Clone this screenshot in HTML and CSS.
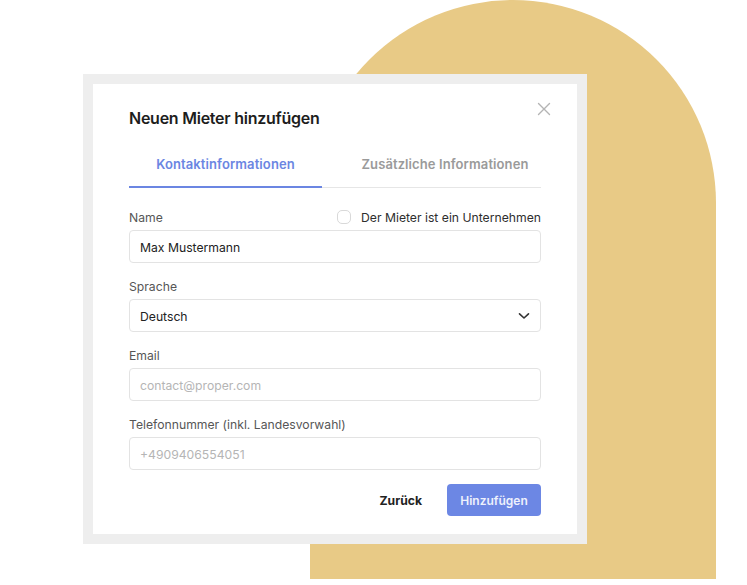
FILE: index.html
```html
<!DOCTYPE html>
<html lang="de">
<head>
<meta charset="utf-8">
<title>Neuen Mieter hinzufügen</title>
<link rel="stylesheet" href="styles.css">
</head>
<body>
<div class="stage">
  <div class="blob"></div>
  <div class="modal">
    <button class="close" aria-label="Schließen">
      <svg width="14" height="14" viewBox="0 0 14 14"><path d="M1.5 1.5 L12.5 12.5 M12.5 1.5 L1.5 12.5" stroke="#b4b4b4" stroke-width="1.4" fill="none" stroke-linecap="round"/></svg>
    </button>
    <h1 class="title">Neuen Mieter hinzufügen</h1>
    <div class="tabs">
      <div class="tab active">Kontaktinformationen</div>
      <div class="tab">Zusätzliche Informationen</div>
    </div>
    <form class="form">
      <div class="field">
        <div class="label-row">
          <label class="label">Name</label>
          <label class="check"><span class="box"></span>Der Mieter ist ein Unternehmen</label>
        </div>
        <div class="input">Max Mustermann</div>
      </div>
      <div class="field">
        <div class="label-row"><label class="label">Sprache</label></div>
        <div class="input select">Deutsch
          <svg width="12" height="8" viewBox="0 0 12 8"><path d="M1.5 1.8 L6 6 L10.5 1.8" stroke="#333" stroke-width="1.6" fill="none" stroke-linecap="round" stroke-linejoin="round"/></svg>
        </div>
      </div>
      <div class="field">
        <div class="label-row"><label class="label">Email</label></div>
        <div class="input placeholder">contact@proper.com</div>
      </div>
      <div class="field">
        <div class="label-row"><label class="label">Telefonnummer (inkl. Landesvorwahl)</label></div>
        <div class="input placeholder">+4909406554051</div>
      </div>
      <div class="actions">
        <button type="button" class="btn-back">Zurück</button>
        <button type="button" class="btn-add">Hinzufügen</button>
      </div>
    </form>
  </div>
</div>
</body>
</html>
```
FILE: styles.css
```css
* { box-sizing: border-box; }
html, body { margin: 0; padding: 0; background: #fff; }
body { font-family: Inter, "Noto Sans", "Liberation Sans", sans-serif; }
.stage {
  position: relative;
  width: 747px;
  height: 585px;
  overflow: hidden;
  padding: 74px 0 0 83px;
}
.blob {
  position: absolute;
  left: 310px;
  top: 0;
  width: 406px;
  height: 579px;
  background: #e8ca86;
  border-radius: 203px 203px 0 0;
}
.modal {
  position: relative;
  width: 504px;
  height: 470px;
  background: #fff;
  border: 10px solid #eeeeee;
  padding: 24px 36px 0 36px;
}
.close {
  position: absolute;
  top: 18px;
  right: 26px;
  width: 14px;
  height: 14px;
  padding: 0;
  border: 0;
  background: none;
  display: flex;
}
.title {
  margin: 0;
  font-size: 16px;
  line-height: 20px;
  font-weight: 600;
  color: #1d1d1d;
  letter-spacing: -0.25px;
}
.tabs {
  display: flex;
  margin-top: 26px;
  border-bottom: 1px solid #e6e6e6;
}
.tab {
  flex: 0 0 auto;
  text-align: center;
  font-size: 13px;
  line-height: 20px;
  font-weight: 600;
  letter-spacing: 0.1px;
  color: #9a9a9a;
  padding-bottom: 12px;
  margin-bottom: -1px;
  border-bottom: 2px solid transparent;
}
.tab:first-child { width: 193px; }
.tab:last-child { flex: 1; padding-left: 27px; }
.tab.active { color: #6b86e2; border-bottom-color: #6b86e2; }
.form {
  display: flex;
  flex-direction: column;
  gap: 13px;
  margin-top: 19px;
}
.field { display: flex; flex-direction: column; gap: 3px; }
.label-row {
  display: flex;
  justify-content: space-between;
  align-items: center;
  height: 20px;
}
.label { font-size: 12.2px; color: #565656; }
.check {
  display: flex;
  align-items: center;
  gap: 10px;
  font-size: 12.2px;
  color: #2e2e2e;
}
.box {
  width: 14px;
  height: 14px;
  border: 1px solid #d9d9d9;
  border-radius: 5px;
  background: #fff;
}
.input {
  height: 33px;
  border: 1px solid #e3e3e3;
  border-radius: 4px;
  padding: 1px 10px 0;
  display: flex;
  align-items: center;
  font-size: 12.2px;
  color: #222;
}
.input.placeholder { color: #b5b5b5; }
.select { justify-content: space-between; padding-right: 10px; }
.actions {
  display: flex;
  justify-content: flex-end;
  align-items: center;
  gap: 25px;
  margin-top: 1px;
}
.btn-back {
  border: 0;
  background: none;
  padding: 0;
  font-family: inherit;
  font-size: 12.2px;
  font-weight: 700;
  color: #222;
}
.btn-add {
  width: 94px;
  height: 32px;
  border: 0;
  border-radius: 4px;
  background: #6c87e4;
  color: #eef1fc;
  font-family: inherit;
  font-size: 12px;
  font-weight: 600;
}
```
